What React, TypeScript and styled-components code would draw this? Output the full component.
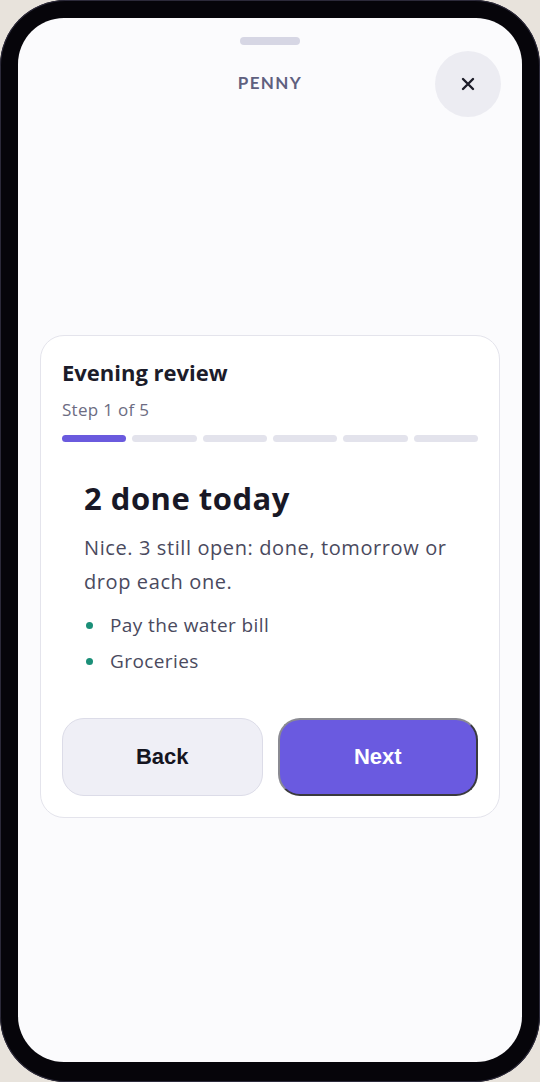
import React from 'react'
import styled, { createGlobalStyle } from 'styled-components'

const GlobalStyle = createGlobalStyle`
    html, body {
        margin: 0;
        padding: 0;
        background: #e8e3dc;
    }
    * {
        box-sizing: border-box;
    }
`

const steps = [true, false, false, false, false, false]
const openItems = ['Pay the water bill', 'Groceries']

export default function App() {
    return (
        <>
            <GlobalStyle />
            <Frame>
                <Screen>
                    <Handle />
                    <Header>
                        <Brand>PENNY</Brand>
                        <CloseButton aria-label="Close">
                            <svg width="16" height="16" viewBox="0 0 16 16">
                                <path
                                    d="M3 3 L13 13 M13 3 L3 13"
                                    stroke="#1c1c28"
                                    strokeWidth="2.4"
                                    strokeLinecap="round"
                                />
                            </svg>
                        </CloseButton>
                    </Header>
                    <Body>
                        <Card>
                            <CardTitle>Evening review</CardTitle>
                            <StepLabel>Step 1 of 5</StepLabel>
                            <Progress>
                                {steps.map((active, i) => (
                                    <Segment key={i} $active={active} />
                                ))}
                            </Progress>
                            <Content>
                                <Heading>2 done today</Heading>
                                <Lead>Nice. 3 still open: done, tomorrow or drop each one.</Lead>
                                <List>
                                    {openItems.map((item) => (
                                        <Item key={item}>
                                            <Dot />
                                            {item}
                                        </Item>
                                    ))}
                                </List>
                            </Content>
                            <Actions>
                                <BackButton>Back</BackButton>
                                <NextButton>Next</NextButton>
                            </Actions>
                        </Card>
                    </Body>
                </Screen>
            </Frame>
        </>
    )
}

const Frame = styled.div`
    width: 540px;
    height: 1082px;
    padding: 18px 18px 20px 18px;
    background: #06050a;
    border-radius: 66px;
    box-shadow: inset 0 0 0 1px #2c2a3a;
`

const Screen = styled.div`
    height: 100%;
    background: #fbfbfd;
    border-radius: 46px;
    display: flex;
    flex-direction: column;
    align-items: center;
    overflow: hidden;
    font-family: 'Open Sans', Lato, sans-serif;
`

const Handle = styled.div`
    width: 60px;
    height: 8px;
    margin-top: 19px;
    border-radius: 4px;
    background: #d6d6e4;
`

const Header = styled.header`
    position: relative;
    width: 100%;
    height: 62px;
    display: flex;
    align-items: center;
    justify-content: center;
`

const Brand = styled.div`
    font-family: Lato, sans-serif;
    font-size: 17px;
    font-weight: 700;
    letter-spacing: 1.4px;
    color: #5f607f;
    margin-top: 12px;
`

const CloseButton = styled.button`
    position: absolute;
    right: 21px;
    top: 6px;
    width: 66px;
    height: 66px;
    border: none;
    border-radius: 50%;
    background: #ececf2;
    display: flex;
    align-items: center;
    justify-content: center;
    padding: 0;
`

const Body = styled.main`
    width: 100%;
    padding: 228px 22px 0 22px;
`

const Card = styled.section`
    background: #ffffff;
    border: 1px solid #e4e4ec;
    border-radius: 24px;
    padding: 22px 21px 21px 21px;
`

const CardTitle = styled.h2`
    margin: 0;
    font-size: 22px;
    font-weight: 700;
    color: #1c1c2a;
    line-height: 28px;
`

const StepLabel = styled.div`
    margin-top: 14px;
    font-size: 17px;
    letter-spacing: 0.3px;
    color: #6c6c82;
    line-height: 20px;
`

const Progress = styled.div`
    display: grid;
    grid-template-columns: repeat(6, 1fr);
    gap: 6px;
    margin-top: 15px;
`

const Segment = styled.div<{ $active: boolean }>`
    height: 7px;
    border-radius: 4px;
    background: ${(p) => (p.$active ? '#6a5ade' : '#e3e3ec')};
`

const Content = styled.div`
    padding: 38px 22px 0 22px;
`

const Heading = styled.h1`
    margin: 0;
    font-size: 31px;
    font-weight: 700;
    letter-spacing: 0.5px;
    color: #181826;
    line-height: 36px;
`

const Lead = styled.p`
    margin: 15px 0 0 0;
    font-size: 20px;
    letter-spacing: 0.6px;
    line-height: 34px;
    color: #4a4a5e;
`

const List = styled.ul`
    list-style: none;
    margin: 8px 0 0 0;
    padding: 0;
`

const Item = styled.li`
    display: flex;
    align-items: center;
    height: 36px;
    font-size: 19px;
    letter-spacing: 0.4px;
    color: #4a4a5e;
`

const Dot = styled.span`
    width: 7px;
    height: 7px;
    border-radius: 50%;
    background: #1b8f78;
    margin: 0 17px 0 2px;
`

const Actions = styled.div`
    display: grid;
    grid-template-columns: 1fr 1fr;
    gap: 15px;
    margin-top: 39px;
`

const BackButton = styled.button`
    height: 78px;
    border-radius: 22px;
    border: 1px solid #dcdce8;
    background: #efeff6;
    font-family: 'Liberation Sans', Arial, sans-serif;
    font-size: 22px;
    font-weight: 700;
    color: #15151f;
`

const NextButton = styled.button`
    height: 78px;
    border-radius: 22px;
    border: 2px outset #8a8a92;
    background: #6a5ae0;
    font-family: 'Liberation Sans', Arial, sans-serif;
    font-size: 22px;
    font-weight: 700;
    color: #ffffff;
`
